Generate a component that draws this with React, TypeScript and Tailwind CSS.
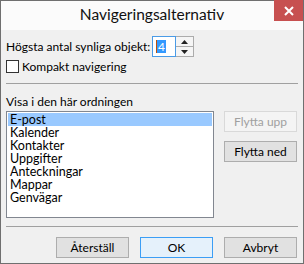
import React from "react";

const font = { fontFamily: 'Lato, "Segoe UI", sans-serif' };

function Btn({ children, disabled, primary }: { children: React.ReactNode; disabled?: boolean; primary?: boolean }) {
  const cls = disabled
    ? "border-[#d9d9d9] bg-[#f4f4f4] text-[#a0a0a0]"
    : primary
    ? "border-[#3c9ef5] bg-[#e5f1fb] text-black"
    : "border-[#adadad] bg-[#e1e1e1] text-black";
  return (
    <div className={`flex h-[21px] w-[73px] items-center justify-center border text-[12px] leading-none ${cls}`}>
      {children}
    </div>
  );
}

const items = ["E-post", "Kalender", "Kontakter", "Uppgifter", "Anteckningar", "Mappar", "Genvägar"];

export default function App() {
  return (
    <div
      className="flex h-[264px] w-[304px] flex-col border border-[#6f6f6f] bg-[#f0f0f0] text-black"
      style={font}
    >
      <div className="relative flex h-[29px] shrink-0 items-center justify-center bg-[#fbfbfb] pb-[2px]">
        <span className="text-[15.5px] leading-none text-[#111]">Navigeringsalternativ</span>
        <div className="absolute right-0 top-[-1px] flex h-[21px] w-[29px] items-center justify-center bg-[#c75050]">
          <svg width="10" height="10" viewBox="0 0 10 10">
            <path d="M1 1 L9 9 M9 1 L1 9" stroke="white" strokeWidth="2" />
          </svg>
        </div>
      </div>

      <div className="flex flex-1 flex-col px-[5px]">
        <div className="mt-[6px] flex h-[21px] items-center">
          <span className="w-[146px] whitespace-nowrap text-[12px] leading-none">Högsta antal synliga objekt:</span>
          <div className="flex h-[21px]">
            <div className="flex w-[24px] items-center border border-[#4a9be6] bg-white pl-[3px]">
              <div className="h-[13px] w-[1px] bg-[#c0500a]" />
              <span className="flex h-[13px] items-center bg-[#3399ff] px-[1px] text-[12px] leading-none text-white">4</span>
            </div>
            <div className="flex w-[18px] flex-col border border-l-0 border-[#acacac] bg-[#f5f5f5]">
              <div className="flex flex-1 items-center justify-center border-b border-[#acacac]">
                <svg width="7" height="4" viewBox="0 0 7 4">
                  <path d="M0 4 L3.5 0 L7 4 Z" fill="#222" />
                </svg>
              </div>
              <div className="flex flex-1 items-center justify-center">
                <svg width="7" height="4" viewBox="0 0 7 4">
                  <path d="M0 0 L3.5 4 L7 0 Z" fill="#222" />
                </svg>
              </div>
            </div>
          </div>
        </div>

        <div className="mt-[3px] flex h-[13px] items-center gap-[3px]">
          <div className="h-[13px] w-[13px] border border-[#333] bg-white" />
          <span className="text-[12px] leading-none">Kompakt navigering</span>
        </div>

        <div className="mt-[10px] h-[1px] bg-[#a0a0a0]" />

        <div className="mt-[10px] h-[15px] text-[12px] leading-[15px]">Visa i den här ordningen</div>

        <div className="mt-[2px] flex gap-[10px]">
          <div className="flex h-[107px] w-[208px] flex-col border border-[#828790] bg-white p-[1px]">
            {items.map((it, i) => (
              <div
                key={it}
                className={`h-[13px] pl-[2px] text-[12.5px] leading-[13px] ${i === 0 ? "bg-[#99c9ff]" : ""}`}
              >
                {it}
              </div>
            ))}
          </div>
          <div className="flex flex-col gap-[9px]">
            <Btn disabled>Flytta upp</Btn>
            <Btn>Flytta ned</Btn>
          </div>
        </div>

        <div className="mt-[8px] h-[1px] bg-[#a0a0a0]" />

        <div className="mt-[10px] flex justify-end gap-[11px] pr-[1px]">
          <Btn>Återställ</Btn>
          <Btn primary>OK</Btn>
          <Btn>Avbryt</Btn>
        </div>
      </div>
    </div>
  );
}
